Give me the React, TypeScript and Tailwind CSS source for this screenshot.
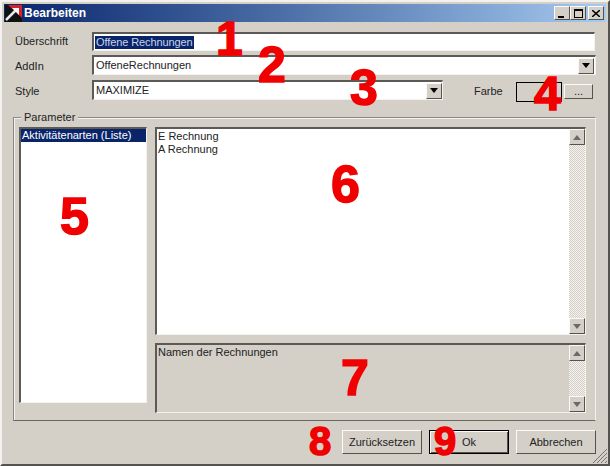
const sunken = "border-t-2 border-l-2 border-r border-b border-t-[#5c5a56] border-l-[#5c5a56] border-r-[#f4f2ee] border-b-[#f4f2ee]";
const raised = "border border-t-[#fbfaf8] border-l-[#fbfaf8] border-r-[#55534f] border-b-[#55534f] bg-[#d4d0c8]";

const ArrowBtn = ({ up, className = "" }: { up?: boolean; className?: string }) => (
  <div className={`${raised} w-[16px] h-[16px] flex items-center justify-center shrink-0 ${className}`}>
    <svg width="8" height="5" viewBox="0 0 8 5">
      <path d={up ? "M0 5 L4 0 L8 5 Z" : "M0 0 L8 0 L4 5 Z"} fill="#6a6a6a" />
    </svg>
  </div>
);

const DropBtn = () => (
  <div className={`${raised} w-[16px] h-[16px] flex items-center justify-center shrink-0`}>
    <svg width="8" height="5" viewBox="0 0 8 5">
      <path d="M0 0 L8 0 L4 5 Z" fill="#000" />
    </svg>
  </div>
);

const ScrollBar = () => (
  <div className="w-[16px] h-full flex flex-col shrink-0">
    <ArrowBtn up />
    <div className="flex-1 bg-[repeating-conic-gradient(#f4f2ee_0_25%,#d4d0c8_0_50%)] bg-[length:2px_2px]" />
    <ArrowBtn />
  </div>
);

const Label = ({ children, className = "" }: { children: string; className?: string }) => (
  <div className={`w-[90px] pl-[13px] text-[11px] text-[#222] shrink-0 ${className}`}>{children}</div>
);

const CaptionBtn = ({ children }: { children: React.ReactNode }) => (
  <div className={`${raised} w-[16px] h-[14px] flex items-center justify-center`}>{children}</div>
);

const Btn = ({ children, def }: { children: string; def?: boolean }) => (
  <button
    className={`w-[80px] h-[24px] text-[11px] text-[#222] ${
      def
        ? "border border-black bg-[#d4d0c8] shadow-[inset_1px_1px_0_#fbfaf8,inset_-1px_-1px_0_#55534f]"
        : raised
    }`}
  >
    {children}
  </button>
);

const Num = ({ n, className }: { n: string; className: string }) => (
  <div
    className={`absolute leading-none font-bold text-[#f00000] [-webkit-text-stroke:1.5px_#f00000] font-['Liberation_Sans',sans-serif] ${className}`}
  >
    {n}
  </div>
);

export default function App() {
  return (
    <div className="relative w-[610px] h-[466px] overflow-hidden bg-[#d4d0c8] font-['Liberation_Sans',sans-serif] border-t-2 border-t-[#f4f2ee] border-l-2 border-l-[#f4f2ee] border-r-2 border-r-[#55534f] border-b-2 border-b-[#55534f] flex flex-col">
      {/* title bar */}
      <div className="mx-[2px] mt-[2px] h-[18px] shrink-0 flex items-center bg-gradient-to-r from-[#0a246a] to-[#a6caf0]">
        <svg width="17" height="17" viewBox="0 0 17 17" className="ml-[1px] shrink-0">
          <rect width="17" height="17" fill="#111" />
          <path d="M3 0 H17 V13 Z" fill="#d8202a" />
          <path d="M1 15 L11 5" stroke="#e8e8e8" strokeWidth="2.5" />
          <path d="M7 3 H14 V10 Z" fill="#fff" />
        </svg>
        <span className="ml-[2px] text-[12px] font-bold text-white">Bearbeiten</span>
        <div className="ml-auto flex items-center mr-[2px]">
          <CaptionBtn>
            <div className="w-[6px] h-[2px] bg-black mt-[7px] mr-[2px]" />
          </CaptionBtn>
          <CaptionBtn>
            <div className="w-[9px] h-[9px] border border-black border-t-2" />
          </CaptionBtn>
          <div className="w-[2px]" />
          <CaptionBtn>
            <svg width="8" height="7" viewBox="0 0 8 7">
              <path d="M0 0 L8 7 M8 0 L0 7" stroke="#000" strokeWidth="1.5" />
            </svg>
          </CaptionBtn>
        </div>
      </div>

      {/* form rows */}
      <div className="flex items-center mt-[10px] h-[19px]">
        <Label>Überschrift</Label>
        <div className={`${sunken} bg-white w-[503px] h-[19px] flex items-center pl-[1px] text-[11px] text-[#222]`}>
          <span className="bg-[#0a246a] text-[#c8d4ea] leading-[13px] px-[1px] tracking-[-0.1px]">Offene Rechnungen</span>
        </div>
      </div>
      <div className="flex items-center mt-[4px] h-[20px]">
        <Label className="pt-[2px]">AddIn</Label>
        <div className={`${sunken} bg-white w-[504px] h-[20px] flex items-center pl-[2px] text-[11px] text-[#222]`}>
          OffeneRechnungen
          <div className="ml-auto mr-[1px]">
            <DropBtn />
          </div>
        </div>
      </div>
      <div className="flex items-center mt-[5px] h-[20px]">
        <Label className="pt-[2px]">Style</Label>
        <div className={`${sunken} bg-white w-[351px] h-[20px] flex items-center pl-[2px] text-[11px] text-[#222]`}>
          MAXIMIZE
          <div className="ml-auto">
            <DropBtn />
          </div>
        </div>
        <div className="ml-[31px] pt-[2px] text-[11px] text-[#222] w-[42px]">Farbe</div>
        <div className="w-[46px] h-[20px] border border-black mt-[3px] shrink-0" />
        <button className={`${raised} ml-[2px] w-[29px] h-[15px] mt-[2px] text-[11px] leading-[10px] text-[#222] shrink-0`}>...</button>
      </div>

      {/* parameter group */}
      <div className="relative ml-[11px] mt-[17px] w-[583px] h-[304px] border border-t-[#8a8884] border-l-[#8a8884] border-r-[#f4f2ee] border-b-[#6a6864] shadow-[inset_1px_1px_0_#f4f2ee] flex pl-[5px] pt-[9px] gap-[8px]">
        <div className="absolute -top-[7px] left-[7px] bg-[#d4d0c8] px-[3px] text-[11px] leading-[13px] text-[#222]">Parameter</div>
        <div className={`${sunken} bg-white w-[128px] h-[276px] text-[11px]`}>
          <div className="bg-[#0a246a] text-white leading-[13px] pl-[1px]">Aktivitätenarten (Liste)</div>
        </div>
        <div className="flex flex-col gap-[8px]">
          <div className={`${sunken} bg-white w-[431px] h-[208px] flex text-[11px] leading-[13px] text-[#222]`}>
            <div className="flex-1 pl-[1px] pt-[1px]">
              <div>E Rechnung</div>
              <div>A Rechnung</div>
            </div>
            <ScrollBar />
          </div>
          <div className={`${sunken} w-[431px] h-[70px] flex text-[11px] leading-[13px] text-[#222]`}>
            <div className="flex-1 pl-[1px] pt-[1px]">Namen der Rechnungen</div>
            <ScrollBar />
          </div>
        </div>
      </div>

      {/* buttons */}
      <div className="flex justify-end gap-[7px] mt-[9px] pr-[12px]">
        <Btn>Zurücksetzen</Btn>
        <Btn def>Ok</Btn>
        <Btn>Abbrechen</Btn>
      </div>

      {/* resize grip */}
      <svg width="14" height="14" viewBox="0 0 14 14" className="absolute right-[1px] bottom-[1px]">
        <path d="M0 14 L14 0 M4 14 L14 4 M8 14 L14 8 M12 14 L14 12" stroke="#77756f" strokeWidth="1" />
      </svg>

      {/* annotations */}
      <Num n="1" className="text-[48px] left-[214px] top-[13px]" />
      <Num n="2" className="text-[50px] left-[256px] top-[38px]" />
      <Num n="3" className="text-[50px] left-[348px] top-[61px]" />
      <Num n="4" className="text-[48px] left-[532px] top-[68px]" />
      <Num n="5" className="text-[52px] left-[58px] top-[188px]" />
      <Num n="6" className="text-[52px] left-[329px] top-[156px]" />
      <Num n="7" className="text-[50px] left-[339px] top-[351px]" />
      <Num n="8" className="text-[40px] left-[307px] top-[419px]" />
      <Num n="9" className="text-[40px] left-[432px] top-[419px]" />
    </div>
  );
}
